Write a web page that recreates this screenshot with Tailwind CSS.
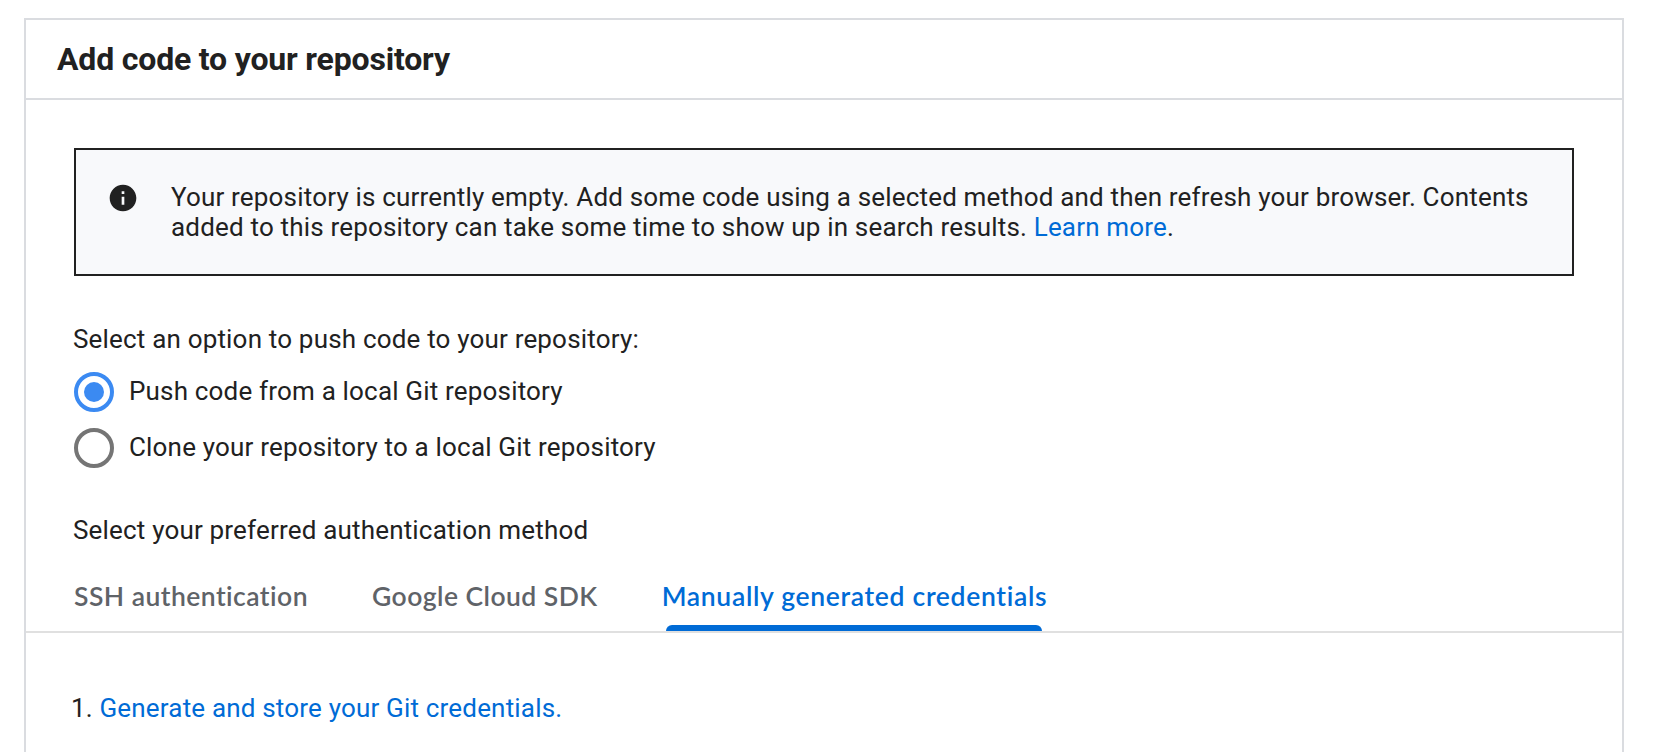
<!DOCTYPE html>
<html lang="en">
<head>
<meta charset="utf-8">
<title>Add code to your repository</title>
<script src="https://cdn.jsdelivr.net/npm/@tailwindcss/browser@4"></script>
</head>
<body class="bg-white">
<div class="h-[752px] overflow-hidden pt-[18px] pl-6 font-['Roboto',sans-serif] text-[26px] leading-[30px] tracking-[0.18px] text-[#212121]">
  <section class="h-[800px] w-[1600px] border-2 border-[#dadce0]">
    <header class="flex h-20 items-center border-b-2 border-[#dadce0] pl-[31px]">
      <h1 class="text-[32px] font-bold tracking-[-0.18px]">Add code to your repository</h1>
    </header>
    <div class="pt-12 pr-12 pl-[47px]">
      <div class="ml-px flex h-32 border-2 border-[#212121] bg-[#f8f9fb] pt-8 pl-[31px]">
        <svg class="h-8 w-8 shrink-0" viewBox="0 0 24 24" fill="#212121"><path d="M12 2C6.48 2 2 6.48 2 12s4.48 10 10 10 10-4.48 10-10S17.52 2 12 2zm1 15h-2v-6h2v6zm0-8h-2V7h2v2z"/></svg>
        <p class="ml-8 whitespace-nowrap">Your repository is currently empty. Add some code using a selected method and then refresh your browser. Contents<br>added to this repository can take some time to show up in search results. <a class="text-[#006bd6]">Learn more</a>.</p>
      </div>
      <p class="mt-12">Select an option to push code to your repository:</p>
      <div class="mt-[18px] ml-px flex h-10 items-center gap-[15px]">
        <span class="flex h-10 w-10 items-center justify-center rounded-full border-4 border-[#3b8af2]"><span class="h-5 w-5 rounded-full bg-[#3b8af2]"></span></span>
        <span class="-mt-0.5">Push code from a local Git repository</span>
      </div>
      <div class="mt-4 ml-px flex h-10 items-center gap-[15px]">
        <span class="h-10 w-10 rounded-full border-4 border-[#757575]"></span>
        <span class="-mt-0.5">Clone your repository to a local Git repository</span>
      </div>
      <p class="mt-[47px]">Select your preferred authentication method</p>
    </div>
    <nav class="mt-5 flex h-[68px] gap-[64px] border-b-2 border-[#e0e0e0] pl-12 font-['Lato',sans-serif] text-[26.5px] font-semibold tracking-[0.46px] text-[#5f6368]">
      <div class="pt-4">SSH authentication</div>
      <div class="pt-4">Google Cloud SDK</div>
      <div class="flex flex-col justify-between pt-4 text-[#006bd6]"><span class="tracking-[0.67px]">Manually generated credentials</span><span class="ml-1 h-1.5 w-[376px] rounded-t-md bg-[#006bd6]"></span></div>
    </nav>
    <p class="mt-[60px] ml-[45px]">1. <a class="text-[#006bd6]">Generate and store your Git credentials.</a></p>
  </section>
</div>
</body>
</html>
